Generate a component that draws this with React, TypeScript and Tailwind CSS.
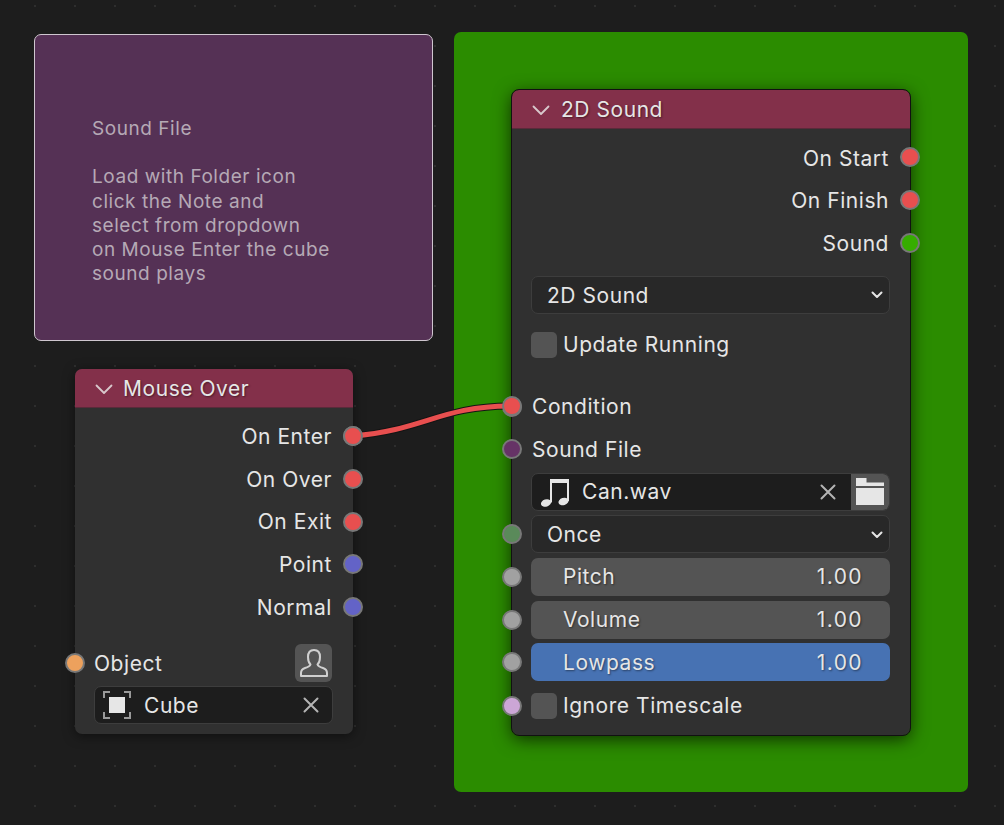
import React from 'react'

const FONT = "font-['Inter','Noto_Sans',sans-serif]"

const Socket = ({ color, side }: { color: string; side: 'left' | 'right' }) => (
  <span
    className={`absolute top-1/2 h-[20px] w-[20px] -translate-y-1/2 rounded-full border-2 border-[#787878] ${side === 'left' ? 'left-[-10px]' : 'right-[-10px]'}`}
    style={{ backgroundColor: color }}
  />
)

const Chevron = () => (
  <svg width="18" height="11" viewBox="0 0 18 11" fill="none" stroke="#d8c8cc" strokeWidth="1.8" strokeLinecap="round" strokeLinejoin="round">
    <path d="M1.5 1.5 L9 9 L16.5 1.5" />
  </svg>
)

const SmallChevron = () => (
  <svg width="12" height="8" viewBox="0 0 12 8" fill="none" stroke="#e6e6e6" strokeWidth="2" strokeLinecap="round" strokeLinejoin="round">
    <path d="M1.5 1.5 L6 6 L10.5 1.5" />
  </svg>
)

const Cross = () => (
  <svg width="16" height="16" viewBox="0 0 16 16" fill="none" stroke="#b4b4b4" strokeWidth="2" strokeLinecap="round">
    <path d="M1.5 1.5 L14.5 14.5 M14.5 1.5 L1.5 14.5" />
  </svg>
)

const Header = ({ title, gap = 'gap-[11px]' }: { title: string; gap?: string }) => (
  <div className={`flex h-[39px] shrink-0 items-center ${gap} rounded-t-[7px] border-b border-[#5a2a3a] bg-[#83304a] pl-[20px] pt-[2px] text-[21px] text-[#e6e6e6] [text-shadow:1px_1px_2px_rgba(0,0,0,0.45)]`}>
    <Chevron />
    <span>{title}</span>
  </div>
)

const OutRow = ({ label, color, nudge = 'pt-px' }: { label: string; color: string; nudge?: string }) => (
  <div className={`relative flex h-[42.67px] items-center justify-end pr-[21px] ${nudge} text-[#e6e6e6]`}>
    <span>{label}</span>
    <Socket color={color} side="right" />
  </div>
)

const InRow = ({ label, color }: { label: string; color: string }) => (
  <div className="relative flex h-[42.67px] items-center pl-[20px] text-[#e6e6e6]">
    <span>{label}</span>
    <Socket color={color} side="left" />
  </div>
)

const Checkbox = ({ label }: { label: string }) => (
  <div className="flex items-center gap-[6px] text-[#e6e6e6]">
    <span className="h-[26px] w-[26px] rounded-[5px] bg-[#545454]" />
    <span>{label}</span>
  </div>
)

const Dropdown = ({ label }: { label: string }) => (
  <div className="flex h-[38px] items-center justify-between rounded-[7px] border border-[#3d3d3d] bg-[#282828] pl-[15px] pr-[6px] pt-px text-[#e6e6e6]">
    <span>{label}</span>
    <SmallChevron />
  </div>
)

const Slider = ({ label, active, socket }: { label: string; active?: boolean; socket: string }) => (
  <div className={`relative flex h-[38px] items-center justify-between rounded-[7px] pl-[32px] pr-[27px] text-[#e6e6e6] [text-shadow:1px_1px_2px_rgba(0,0,0,0.45)] ${active ? 'bg-[#4772b3]' : 'bg-[#545454]'}`}>
    <span>{label}</span>
    <span className="tracking-[1.4px]">1.00</span>
    <span
      className="absolute left-[-29px] top-1/2 h-[20px] w-[20px] -translate-y-1/2 rounded-full border-2 border-[#787878]"
      style={{ backgroundColor: socket }}
    />
  </div>
)

const NoteIcon = () => (
  <svg width="30" height="30" viewBox="0 0 30 30" fill="#e6e6e6">
    <path d="M10 2 H29 V24 H27 V6 H12 V25.5 H10 Z" />
    <ellipse cx="6" cy="26" rx="5.2" ry="3.6" transform="rotate(-18 6 26)" />
    <ellipse cx="23.5" cy="24.5" rx="5.2" ry="3.6" transform="rotate(-18 23.5 24.5)" />
  </svg>
)

const FolderIcon = () => (
  <svg width="28" height="27" viewBox="0 0 28 27" fill="#e6e6e6">
    <path d="M0 0 H10.5 V4.5 H28 V8 H0 Z" />
    <path d="M0 10 H28 V27 H0 Z" />
  </svg>
)

const CubeIcon = () => (
  <svg width="28" height="28" viewBox="0 0 28 28" fill="none">
    <rect x="6" y="6" width="16" height="16" fill="#e6e6e6" />
    <path d="M1 7 V1 H7 M21 1 H27 V7 M27 21 V27 H21 M7 27 H1 V21" stroke="#9a9a9a" strokeWidth="2" />
  </svg>
)

const EyedropIcon = () => (
  <svg width="28" height="28" viewBox="0 0 28 28" fill="none" stroke="#d0d0d0" strokeWidth="2" strokeLinejoin="round">
    <path d="M14 1 C9.5 1 8 4 8 8 C8 11.5 9 14 10.5 15.5 C10 17 8 18 5 19 C2 20 1 21.5 1 24 V27 H27 V24 C27 21.5 26 20 23 19 C20 18 18 17 17.5 15.5 C19 14 20 11.5 20 8 C20 4 18.5 1 14 1 Z" />
  </svg>
)

const MouseOverNode = () => (
  <div className="absolute left-[75px] top-[369px] flex h-[365px] w-[278px] flex-col rounded-[7px] bg-[#303030] shadow-[0_2px_12px_rgba(0,0,0,0.5)]">
    <Header title="Mouse Over" gap="gap-[10px]" />
    <div className="flex flex-col pt-[7px]">
      <OutRow label="On Enter" color="#e84f4f" />
      <OutRow label="On Over" color="#e84f4f" />
      <OutRow label="On Exit" color="#e84f4f" />
      <OutRow label="Point" color="#6363c7" />
      <OutRow label="Normal" color="#6363c7" />
    </div>
    <div className="relative mt-[16px] flex h-[38px] items-center justify-between pl-[19px] pr-[21px] text-[#e6e6e6]">
      <span>Object</span>
      <span className="flex h-[38px] w-[37px] items-center justify-center rounded-[6px] bg-[#545454]">
        <EyedropIcon />
      </span>
      <Socket color="#eda15d" side="left" />
    </div>
    <div className="ml-[19px] mr-[20px] mt-[4px] flex h-[38px] items-center rounded-[7px] border border-[#3d3d3d] bg-[#1d1d1d] pl-[8px] pr-[13px] text-[#e6e6e6]">
      <CubeIcon />
      <span className="ml-[13px] flex-1">Cube</span>
      <Cross />
    </div>
  </div>
)

const SoundNode = () => (
  <div className="absolute left-[512px] top-[90px] flex h-[645px] w-[398px] flex-col rounded-[7px] bg-[#303030] outline outline-1 outline-[#111] shadow-[0_4px_18px_rgba(0,0,0,0.7)]">
    <Header title="2D Sound" />
    <div className="flex flex-col pt-[7px]">
      <OutRow label="On Start" color="#e84f4f" nudge="pt-[2px]" />
      <OutRow label="On Finish" color="#e84f4f" nudge="pt-[2px]" />
      <OutRow label="Sound" color="#36ad00" nudge="pt-[2px]" />
    </div>
    <div className="mt-[12px] flex flex-col pl-[19px] pr-[20px]">
      <Dropdown label="2D Sound" />
      <div className="mt-[15px]">
        <Checkbox label="Update Running" />
      </div>
    </div>
    <div className="mt-[25px] flex flex-col">
      <InRow label="Condition" color="#e84f4f" />
      <InRow label="Sound File" color="#663366" />
    </div>
    <div className="mt-[2px] flex flex-col gap-[4.67px] pl-[19px] pr-[20px]">
      <div className="flex h-[38px] overflow-hidden rounded-[7px] border border-[#3d3d3d] bg-[#1d1d1d] text-[#e6e6e6]">
        <div className="flex flex-1 items-center pl-[8px] pr-[15px]">
          <NoteIcon />
          <span className="ml-[12px] flex-1">Can.wav</span>
          <Cross />
        </div>
        <div className="flex w-[38px] items-center justify-center bg-[#545454]">
          <FolderIcon />
        </div>
      </div>
      <div className="relative">
        <Dropdown label="Once" />
        <span className="absolute left-[-29px] top-1/2 h-[20px] w-[20px] -translate-y-1/2 rounded-full border-2 border-[#787878] bg-[#5a8a5a]" />
      </div>
      <Slider label="Pitch" socket="#a1a1a1" />
      <Slider label="Volume" socket="#a1a1a1" />
      <Slider label="Lowpass" socket="#a1a1a1" active />
      <div className="relative mt-[4px]">
        <Checkbox label="Ignore Timescale" />
        <span className="absolute left-[-29px] top-1/2 h-[20px] w-[20px] -translate-y-1/2 rounded-full border-2 border-[#787878] bg-[#cca6d6]" />
      </div>
    </div>
  </div>
)

const App = () => (
  <div className={`relative h-[825px] w-[1004px] overflow-hidden bg-[#1d1d1d] bg-[radial-gradient(#2e2e2e_1px,transparent_1.5px)] bg-[size:40px_40px] bg-[position:15px_26px] text-[21px] tracking-[0.55px] ${FONT}`}>
    {/* note frame */}
    <div className="absolute left-[34px] top-[34px] h-[307px] w-[399px] rounded-[7px] border-[1.5px] border-[#cfc6cf] bg-[#553155] pl-[57px] pt-[82px] text-[19px] leading-[24.2px] tracking-[0.55px] text-[#b5a9b5]">
      <p>Sound File</p>
      <p className="mt-[24.2px]">Load with Folder icon</p>
      <p>click the Note and</p>
      <p>select from dropdown</p>
      <p>on Mouse Enter the cube</p>
      <p>sound plays</p>
    </div>

    {/* green frame */}
    <div className="absolute left-[454px] top-[32px] h-[760px] w-[514px] rounded-[7px] bg-[#2b8c00]" />

    <MouseOverNode />
    <SoundNode />

    {/* link */}
    <svg className="absolute left-0 top-0" width="1004" height="825" fill="none">
      <path d="M353 436 C 425 430, 440 406, 512 406" stroke="#141414" strokeWidth="7" />
      <path d="M353 436 C 425 430, 440 406, 512 406" stroke="#e84f4f" strokeWidth="5" />
    </svg>
    <span className="absolute left-[343px] top-[426px] h-[20px] w-[20px] rounded-full border-2 border-[#787878] bg-[#e84f4f]" />
    <span className="absolute left-[502px] top-[396px] h-[20px] w-[20px] rounded-full border-2 border-[#787878] bg-[#e84f4f]" />
  </div>
)

export default App
